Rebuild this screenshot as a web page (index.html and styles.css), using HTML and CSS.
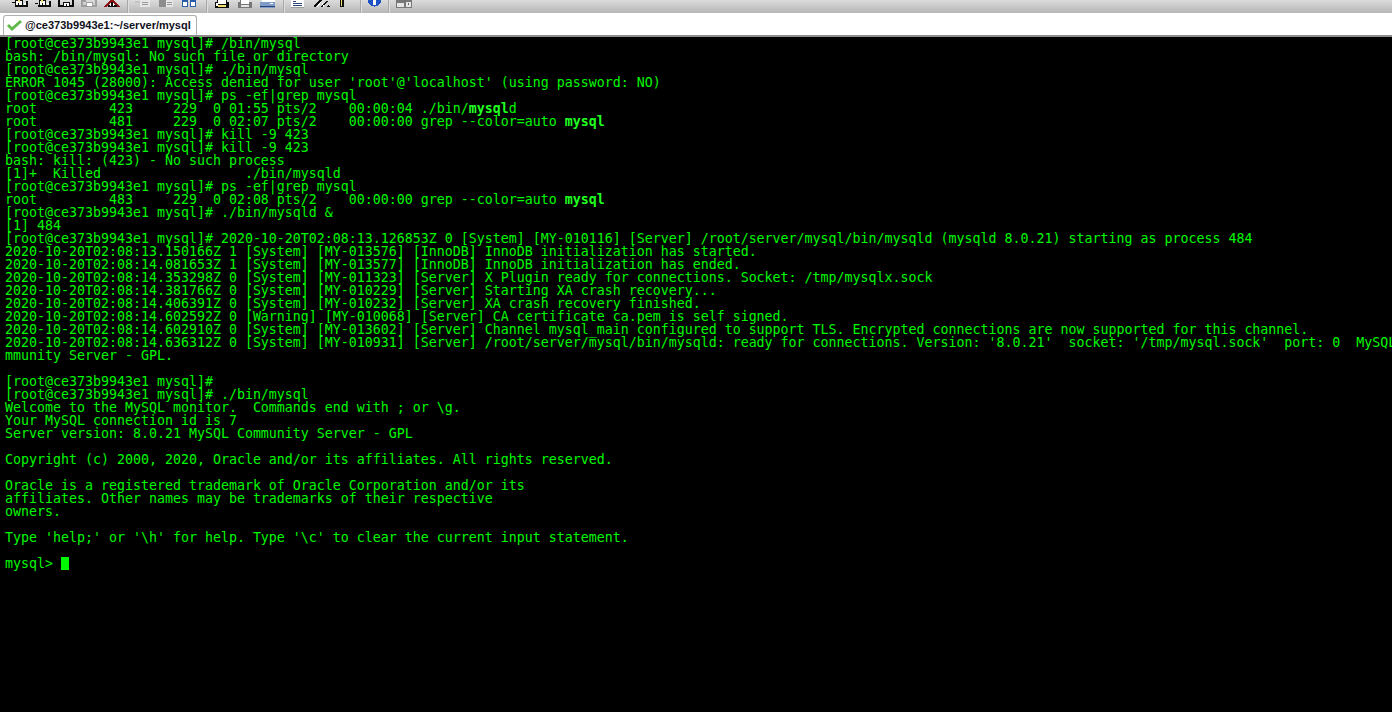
FILE: index.html
```html
<!DOCTYPE html>
<html lang="en">
<head>
<meta charset="utf-8">
<title>@ce373b9943e1:~/server/mysql</title>
<link rel="stylesheet" href="styles.css">
</head>
<body>
<div class="toolbar">
  <div class="group">
    <svg class="ico" viewBox="0 0 16 8"><path class="kf" d="M0 2h3v1H0zM3 5h11V1h2v6H3z"/><rect class="kf" x="3" y="0" width="8" height="7"/><rect class="w" x="4" y="1" width="6" height="4"/><rect class="y" x="6" y="0" width="2" height="2"/><rect class="kf" x="6" y="3" width="1" height="3"/><rect class="w" x="12" y="3" width="2" height="2"/></svg>
    <svg class="ico" viewBox="0 0 16 8"><path class="kf" d="M0 3h3v1H0zM3 5h11V1h2v6H3z"/><rect class="kf" x="4" y="0" width="7" height="7"/><rect class="w" x="5" y="1" width="5" height="4"/><rect class="y" x="6" y="0" width="2" height="2"/><rect class="kf" x="7" y="3" width="1" height="3"/><rect class="w" x="12" y="3" width="2" height="2"/></svg>
    <svg class="ico" viewBox="0 0 16 8"><path class="kf" d="M0 0h2v5h3v2H0zM11 5h3V0h2v7h-5z"/><rect class="kf" x="5" y="2" width="7" height="5"/><rect class="w" x="6" y="3" width="5" height="3"/><rect class="kf" x="8" y="4" width="1" height="3"/></svg>
    <svg class="ico dim" viewBox="0 0 16 8"><path class="sf" d="M0 0h5v2H2v3h3v2H0zM11 5h3V0h2v7h-5z"/><rect class="sf" x="5" y="2" width="7" height="5"/><rect class="w" x="6" y="3" width="5" height="3"/></svg>
    <svg class="ico" viewBox="0 0 16 8"><path class="rf" d="M0 7L6 0h4l6 7h-3L9 2H7L3 7z"/><path class="kf" d="M4 5h9v2H4z"/><rect class="w" x="6" y="3" width="4" height="3"/><rect class="kf" x="7" y="2" width="2" height="5"/></svg>
  </div>
  <span class="sep"></span>
  <div class="group wide">
    <svg class="ico" viewBox="0 0 16 8"><rect class="sl" x="0" y="1" width="6" height="2"/><rect class="wl" x="5" y="0" width="10" height="7"/><path class="g" d="M7 2.500h6M7 4.500h6"/></svg>
    <svg class="ico" viewBox="0 0 16 8"><rect class="sm" x="1" y="0" width="7" height="7"/><rect class="wl" x="8" y="0" width="7" height="7"/><path class="g" d="M9 2.500h5M9 4.500h5"/></svg>
    <svg class="ico" viewBox="0 0 16 8"><rect class="b" x="1" y="0" width="6" height="7"/><rect class="b" x="9" y="0" width="6" height="7"/><rect class="w" x="2" y="2" width="4" height="4"/><rect class="w" x="10" y="2" width="4" height="4"/></svg>
  </div>
  <span class="sep"></span>
  <div class="group">
    <svg class="ico" viewBox="0 0 16 8"><rect class="kf" x="1" y="2" width="14" height="6"/><rect class="w" x="4" y="0" width="8" height="4"/><rect class="kf" x="3" y="0" width="1" height="4"/><rect class="kf" x="12" y="0" width="1" height="4"/><rect class="y" x="4" y="5" width="8" height="2"/><rect class="w" x="2" y="3" width="2" height="3"/></svg>
    <svg class="ico" viewBox="0 0 16 8"><rect class="sd" x="1" y="2" width="14" height="6"/><rect class="w" x="4" y="0" width="8" height="4"/><rect class="sd" x="3" y="0" width="1" height="4"/><rect class="wl" x="4" y="5" width="8" height="2"/></svg>
    <svg class="ico" viewBox="0 0 16 8"><rect class="w" x="2" y="0" width="13" height="3"/><rect class="blue" x="0" y="2" width="15" height="6"/><rect class="navyf" x="0" y="6" width="15" height="1"/><rect class="w" x="10" y="3" width="3" height="1"/></svg>
  </div>
  <span class="sep"></span>
  <div class="group tight">
    <svg class="ico small" viewBox="0 0 13 8"><rect class="w" x="0" y="0" width="13" height="7"/><path class="navy" d="M2 1.500h3M2 3.500h9M2 5.500h9"/><path class="g" d="M0 7.500h13"/></svg>
    <svg class="ico" viewBox="0 0 16 8"><path class="kf" d="M0 5l5-5h3L2 7H0zM7 7l5-6h2l-5 6zM13 7l2-3 1 3z"/><path class="w2" d="M3 7l4-5M8 3l2 4"/></svg>
    <svg class="ico thin" viewBox="0 0 4 8"><rect class="kf" x="0" y="0" width="4" height="7"/><rect class="y" x="1" y="0" width="1" height="6"/></svg>
  </div>
  <span class="sep later"></span>
  <svg class="ico small" viewBox="0 0 13 8"><path class="disc" d="M0 0h13a6.500 6.500 0 0 1-13 0z"/><rect class="w" x="5" y="0" width="3" height="5"/></svg>
  <span class="sep"></span>
  <svg class="ico" viewBox="0 0 16 8"><rect class="sd" x="0" y="0" width="16" height="8"/><rect class="wl" x="1" y="3" width="7" height="4"/><rect class="wl" x="10" y="2" width="5" height="5"/><rect class="g2" x="12" y="3" width="1" height="2"/></svg>
</div>
<div class="tabbar">
  <div class="tab">
    <svg class="check" viewBox="0 0 15 12"><path d="M0 6l2-2 3 3 8-7 2 2-10 9z"/></svg>
    <span>@ce373b9943e1:~/server/mysql</span>
  </div>
</div>
<pre class="term">[root@ce373b9943e1 mysql]# /bin/mysql
bash: /bin/mysql: No such file or directory
[root@ce373b9943e1 mysql]# ./bin/mysql
ERROR 1045 (28000): Access denied for user 'root'@'localhost' (using password: NO)
[root@ce373b9943e1 mysql]# ps -ef|grep mysql
root         423     229  0 01:55 pts/2    00:00:04 ./bin/<b>mysql</b>d
root         481     229  0 02:07 pts/2    00:00:00 grep --color=auto <b>mysql</b>
[root@ce373b9943e1 mysql]# kill -9 423
[root@ce373b9943e1 mysql]# kill -9 423
bash: kill: (423) - No such process
[1]+  Killed                  ./bin/mysqld
[root@ce373b9943e1 mysql]# ps -ef|grep mysql
root         483     229  0 02:08 pts/2    00:00:00 grep --color=auto <b>mysql</b>
[root@ce373b9943e1 mysql]# ./bin/mysqld &amp;
[1] 484
[root@ce373b9943e1 mysql]# 2020-10-20T02:08:13.126853Z 0 [System] [MY-010116] [Server] /root/server/mysql/bin/mysqld (mysqld 8.0.21) starting as process 484
2020-10-20T02:08:13.150166Z 1 [System] [MY-013576] [InnoDB] InnoDB initialization has started.
2020-10-20T02:08:14.081653Z 1 [System] [MY-013577] [InnoDB] InnoDB initialization has ended.
2020-10-20T02:08:14.353298Z 0 [System] [MY-011323] [Server] X Plugin ready for connections. Socket: /tmp/mysqlx.sock
2020-10-20T02:08:14.381766Z 0 [System] [MY-010229] [Server] Starting XA crash recovery...
2020-10-20T02:08:14.406391Z 0 [System] [MY-010232] [Server] XA crash recovery finished.
2020-10-20T02:08:14.602592Z 0 [Warning] [MY-010068] [Server] CA certificate ca.pem is self signed.
2020-10-20T02:08:14.602910Z 0 [System] [MY-013602] [Server] Channel mysql_main configured to support TLS. Encrypted connections are now supported for this channel.
2020-10-20T02:08:14.636312Z 0 [System] [MY-010931] [Server] /root/server/mysql/bin/mysqld: ready for connections. Version: '8.0.21'  socket: '/tmp/mysql.sock'  port: 0  MySQ<span class="clip">L Co</span>
mmunity Server - GPL.

[root@ce373b9943e1 mysql]#
[root@ce373b9943e1 mysql]# ./bin/mysql
Welcome to the MySQL monitor.  Commands end with ; or \g.
Your MySQL connection id is 7
Server version: 8.0.21 MySQL Community Server - GPL

Copyright (c) 2000, 2020, Oracle and/or its affiliates. All rights reserved.

Oracle is a registered trademark of Oracle Corporation and/or its
affiliates. Other names may be trademarks of their respective
owners.

Type 'help;' or '\h' for help. Type '\c' to clear the current input statement.

mysql&gt; <span class="cursor"> </span></pre>
</body>
</html>
```
FILE: styles.css
```css
* { box-sizing: border-box; }
html, body { margin: 0; height: 100%; }
body {
  display: flex;
  flex-direction: column;
  overflow: hidden;
  background: #000;
}
.toolbar {
  height: 13px;
  flex: none;
  display: flex;
  align-items: flex-start;
  padding-left: 12px;
  background: linear-gradient(#dcdcdc, #b6b6b6);
  overflow: hidden;
}
.group { display: flex; gap: 7px; align-items: flex-start; }
.group.wide { margin-right: 2px; }
.group.tight { gap: 10px; }
.sep {
  width: 1px;
  height: 13px;
  margin: 0 7px;
  background: #a8a8a8;
  box-shadow: 1px 0 0 #dedede;
}
.sep.later { margin-left: 16px; }
.ico { display: block; width: 16px; height: 8px; flex: none; shape-rendering: crispEdges; }
.ico.small { width: 13px; }
.ico.thin { width: 4px; }
.k, .g, .navy, .w2 { fill: none; stroke-width: 1; }
.g { stroke: #9a9a9a; }
.navy { stroke: #2b3f78; }
.w2 { stroke: #fff; }
.kf { fill: #0c0c0c; }
.rf { fill: #8c1414; }
.sf { fill: #9e9e9e; }
.w { fill: #fff; }
.wl { fill: #e6e6e6; }
.y { fill: #f4e06a; }
.sl { fill: #c4c4c4; }
.sm { fill: #8d8d8d; }
.sd { fill: #777; }
.b { fill: #2a5da8; }
.blue { fill: #7f9cc8; }
.navyf { fill: #2b3f78; }
.g2 { fill: #666; }
.disc { fill: #1d52c4; }
.tabbar {
  height: 24px;
  flex: none;
  background: #fff;
  border-bottom: 2px solid #8c8c8c;
  padding: 2px 0 0 3px;
  display: flex;
}
.tab {
  width: 194px;
  height: 20px;
  display: flex;
  align-items: center;
  gap: 3px;
  padding-left: 3px;
  background: #fff;
  border: 1px solid #b0b0b0;
  border-bottom: 0;
  border-radius: 3px 3px 0 0;
  font: bold 11px/1 "Liberation Sans", sans-serif;
  color: #10101c;
  white-space: nowrap;
}
.check { width: 15px; height: 12px; flex: none; }
.check path { fill: #63b84c; }
.term {
  flex: 1;
  margin: 0;
  padding: 0 0 0 5px;
  background: #000;
  color: #00f800;
  font: 13.29px/13px "DejaVu Sans Mono", monospace;
  white-space: pre;
  overflow: hidden;
}
.term b { font-weight: bold; color: #20ff20; }
.clip { color: #00f800; }
.cursor { display: inline-block; width: 8px; height: 13px; vertical-align: top; background: #00f800; }
```
